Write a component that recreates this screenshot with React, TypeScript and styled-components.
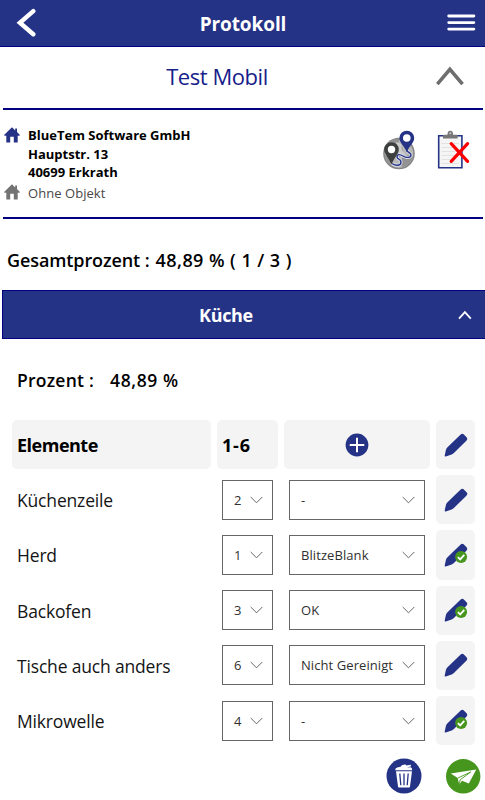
import React from "react";
import styled, { createGlobalStyle } from "styled-components";

const NAVY = "#253386";
const DEEP = "#000080";
const GREEN = "#46961e";

const Global = createGlobalStyle`
  * { box-sizing: border-box; }
  body { margin: 0; background: #fff; color: #000; font-family: "Open Sans", "Noto Sans", sans-serif; }
  button { border: 0; padding: 0; margin: 0; background: none; font: inherit; color: inherit; cursor: pointer; }
  svg { display: block; flex: none; }
`;

const Page = styled.main`
  width: 485px;
  height: 800px;
  overflow: hidden;
  display: flex;
  flex-direction: column;
  background: #fff;
`;

const AppBar = styled.header`
  height: 47px;
  flex: none;
  display: grid;
  grid-template-columns: 61px 1fr 60px;
  align-items: center;
  background: ${NAVY};
  border-bottom: 1px solid ${DEEP};
  color: #fff;
`;

const BackButton = styled.button`
  padding-left: 16px;
`;

const MenuButton = styled.button`
  padding-left: 22px;
`;

const AppTitle = styled.h1`
  margin: 0;
  padding-top: 1px;
  font-size: 19px;
  line-height: 26px;
  font-weight: 700;
  letter-spacing: -0.1px;
  text-align: center;
`;

const Client = styled.section`
  height: 63px;
  flex: none;
  margin: 0 2px 0 3px;
  display: grid;
  grid-template-columns: 47px 1fr 47px;
  align-items: center;
  border-bottom: 2px solid ${DEEP};
`;

const ClientName = styled.h2`
  grid-column: 2;
  margin: 0 52px 3px 0;
  font-size: 22px;
  line-height: 30px;
  letter-spacing: -0.45px;
  font-weight: 400;
  color: #16208a;
  text-align: center;
`;

const ClientToggle = styled.button`
  padding-bottom: 3px;
`;

const Info = styled.section`
  height: 109px;
  flex: none;
  margin: 0 2px 0 3px;
  padding: 16px 12px 0 1px;
  display: flex;
  justify-content: space-between;
  border-bottom: 2px solid ${DEEP};
`;

const InfoLines = styled.div`
  display: grid;
  grid-template-columns: 16px 1fr;
  grid-template-rows: 19px 18px 18px 22px;
  column-gap: 8px;
  align-content: start;
`;

const InfoLine = styled.span<{ $muted?: boolean }>`
  grid-column: 2;
  font-size: 13px;
  line-height: 18px;
  letter-spacing: ${(p) => (p.$muted ? "0.05px" : "0")};
  padding-top: ${(p) => (p.$muted ? "3px" : "0")};
  font-weight: ${(p) => (p.$muted ? 400 : 700)};
  color: ${(p) => (p.$muted ? "#484848" : "#000")};
`;

const HomeIcon = styled.svg<{ $muted?: boolean }>`
  grid-column: 1;
  fill: ${(p) => (p.$muted ? "#737373" : NAVY)};
  margin-top: ${(p) => (p.$muted ? "3px" : "1px")};
`;

const InfoActions = styled.div`
  display: flex;
  gap: 20px;
  padding: 4px 1px 0 0;
  height: 46px;
`;

const Total = styled.p`
  height: 71px;
  flex: none;
  margin: 0;
  padding: 11px 0 0 7px;
  display: flex;
  align-items: center;
  gap: 6px;
  font-size: 18px;
  font-weight: 600;
  letter-spacing: -0.1px;
`;

const TotalValue = styled.span`
  letter-spacing: 0.45px;
`;

const RoomBar = styled.button`
  height: 49px;
  flex: none;
  margin-left: 2px;
  display: grid;
  grid-template-columns: 40px 1fr 27px;
  align-items: center;
  background: ${NAVY};
  border: solid ${DEEP};
  border-width: 1px 0 1px 1px;
  color: #fff;
`;

const RoomName = styled.span`
  grid-column: 2;
  margin-right: 49px;
  font-size: 18px;
  line-height: 26px;
  font-weight: 700;
  letter-spacing: -0.35px;
  text-align: center;
`;

const RoomPercent = styled.p`
  height: 81px;
  flex: none;
  margin: 0;
  padding: 1px 0 0 17px;
  display: flex;
  align-items: center;
  gap: 16px;
  font-size: 17.5px;
  font-weight: 600;
  letter-spacing: 0.25px;
`;

const RoomValue = styled.span`
  letter-spacing: 0.6px;
`;

const Table = styled.div`
  flex: none;
  padding-left: 12px;
  display: grid;
  grid-template-columns: 199px 61px 146px 39px;
  grid-auto-rows: 49.2px;
  gap: 6px;
`;

const HeadCell = styled.div<{ $center?: boolean; $spacing?: string }>`
  display: flex;
  align-items: center;
  justify-content: ${(p) => (p.$center ? "center" : "flex-start")};
  padding: ${(p) => (p.$center ? "0" : "1px 0 0 5px")};
  background: #f4f4f4;
  border-radius: 5px;
  font-size: 18px;
  font-weight: 700;
  letter-spacing: ${(p) => p.$spacing ?? "0"};
`;

const ItemName = styled.div`
  display: flex;
  align-items: center;
  padding: 1px 0 0 5px;
  font-size: 17.5px;
  letter-spacing: -0.17px;
  color: #141414;
`;

const SelectBox = styled.button`
  height: 40px;
  margin: 4.6px 5px 0;
  padding: 0 9px 0 11px;
  display: flex;
  align-items: center;
  justify-content: space-between;
  border: 1px solid #666;
  background: #fff;
  font-size: 13px;
  line-height: 18px;
  letter-spacing: 0.08px;
  color: #303030;
  white-space: nowrap;
`;

const EditButton = styled.button`
  display: flex;
  align-items: center;
  justify-content: center;
  background: #f4f4f4;
  border-radius: 5px;
`;

const Footer = styled.footer`
  display: flex;
  justify-content: flex-end;
  gap: 23px;
  padding: 13px 4px 0 0;
`;

const DownChevron = () => (
  <svg width="13" height="8" viewBox="0 0 13 8" fill="none" stroke="#666" strokeWidth="1">
    <path d="M.7 1 6.5 6.8 12.3 1" />
  </svg>
);

const Home = ({ muted }: { muted?: boolean }) => (
  <HomeIcon $muted={muted} width="16" height="16" viewBox="0 0 16 16">
    <path d="M8 .3 .3 7.8v.9h2V15.5h3.9V9.7h3.6v5.8h3.9V8.7h2v-.9L13 5.1V1.6h-1.8v1.8z" />
  </HomeIcon>
);

const Pencil = ({ done }: { done?: boolean }) => (
  <svg width="24" height="24" viewBox="0 0 24 24">
    <path
      fill={NAVY}
      d="M16.4 1.7Q18.2.1 19.6 1.3L22.8 4.4Q24 5.8 22.6 7.5L9.9 20Q8.7 21.1 7 21.7L1.7 23.4Q.5 23.6.7 22.4L1.9 17Q2.3 15.2 3.5 14.2Z"
    />
    {done && (
      <>
        <circle cx="17.1" cy="13.9" r="6" fill={GREEN} />
        <path d="m13.9 14.1 2.3 2.3 4.1-4.6" fill="none" stroke="#fff" strokeWidth="1.8" />
      </>
    )}
  </svg>
);

const Globe = () => (
  <svg width="34" height="40" viewBox="0 0 34 40">
    <circle cx="16" cy="23.5" r="15.8" fill="#858585" />
    <circle cx="16" cy="23.5" r="14.3" fill="#b9b9b9" />
    <path d="M5 14Q11 8 17 9l-2 4 4 4 2 7-5 3-3-7-5-5zM19 28l8-4 3 3q-3 8-10 10l-4-2zM2 24l5 5 1 6q-6-4-6-11" fill="#929292" />
    <path d="M13 12l5 2 1 6 3 4-5 2-3-5z" fill="#dedede" opacity=".75" />
    <path d="M9 33.5C13 36 18 36 18 32s-4-2-4-5 3-3 6-1 8 2 8-1-4-2-4-5" fill="none" stroke="#e1e2ef" strokeWidth="3" />
    <path d="M9 33.5C13 36 18 36 18 32s-4-2-4-5 3-3 6-1 8 2 8-1-4-2-4-5" fill="none" stroke={NAVY} strokeWidth="1.4" />
    <path fill="#3d3f3e" d="M8.5 12.2A7.3 7.3 0 0 0 1.2 19.5C1.2 24 6 28 8.5 34.5 11 28 15.8 24 15.8 19.5A7.3 7.3 0 0 0 8.5 12.2" />
    <circle cx="8.5" cy="19.5" r="3.7" fill="#fff" />
    <path fill={NAVY} d="M23.8.7A7.4 7.4 0 0 0 16.4 8.1C16.4 13 21 15.5 23.8 22.2 26.6 15.5 31.2 13 31.2 8.1A7.4 7.4 0 0 0 23.8.7" />
    <circle cx="23.8" cy="8" r="3.8" fill="#fff" />
  </svg>
);

const Clipboard = () => (
  <svg width="33" height="40" viewBox="0 0 33 40">
    <path d="M1.7 5.8h23.2v32H1.7z" fill="#f5f5f5" stroke={NAVY} strokeWidth="1.6" />
    <path d="M4.5 13.5h17.5M4.5 17.5h12M4.5 21.5h14M4.5 25.5h14M4.5 29.5h12M4.5 33.5h17.5" stroke="#e2e2e2" />
    <path d="M6 8.5V5.8Q6 4.8 7 4.8h3.5Q10.3.8 13.3.7q3 .1 2.8 4.1h3.5q1 0 1 1v2.7z" fill="#777" />
    <circle cx="13.3" cy="3.3" r="1" fill="#ccc" />
    <path d="m14.2 13.7 16.4 17.6M30.6 13.7 14.2 31.3" stroke="red" strokeWidth="3.2" strokeLinecap="round" />
  </svg>
);

const items = [
  { name: "Küchenzeile", grade: "2", state: "-", done: false },
  { name: "Herd", grade: "1", state: "BlitzeBlank", done: true },
  { name: "Backofen", grade: "3", state: "OK", done: true },
  { name: "Tische auch anders", grade: "6", state: "Nicht Gereinigt", done: false },
  { name: "Mikrowelle", grade: "4", state: "-", done: true },
];

export default function App() {
  return (
    <Page>
      <Global />
      <AppBar>
        <BackButton aria-label="Zurück">
          <svg width="20" height="30" viewBox="0 0 20 30" fill="none" stroke="#fff" strokeWidth="4.4" strokeLinecap="round" strokeLinejoin="miter">
            <path d="M17.3 3.2 3.9 14.8 17.3 26.2" />
          </svg>
        </BackButton>
        <AppTitle>Protokoll</AppTitle>
        <MenuButton aria-label="Menü">
          <svg width="29" height="18" viewBox="0 0 29 18" stroke="#fff" strokeWidth="2.8" strokeLinecap="round">
            <path d="M1.7 2h25.2M1.7 8.6h25.2M1.7 15.1h25.2" />
          </svg>
        </MenuButton>
      </AppBar>

      <Client>
        <ClientName>Test Mobil</ClientName>
        <ClientToggle aria-label="Einklappen">
          <svg width="28" height="20" viewBox="0 0 28 20" fill="none" stroke="#6e6e6e" strokeWidth="3.6">
            <path d="M1.3 18.2 13.9 3.3 26.5 18.2" />
          </svg>
        </ClientToggle>
      </Client>

      <Info>
        <InfoLines>
          <Home />
          <InfoLine>BlueTem Software GmbH</InfoLine>
          <InfoLine>Hauptstr. 13</InfoLine>
          <InfoLine>40699 Erkrath</InfoLine>
          <Home muted />
          <InfoLine $muted>Ohne Objekt</InfoLine>
        </InfoLines>
        <InfoActions>
          <Globe />
          <Clipboard />
        </InfoActions>
      </Info>

      <Total>
        <span>Gesamtprozent :</span>
        <TotalValue>48,89 % ( 1 / 3 )</TotalValue>
      </Total>

      <RoomBar>
        <RoomName>Küche</RoomName>
        <svg width="14" height="10" viewBox="0 0 14 10" fill="none" stroke="#fff" strokeWidth="1.8">
          <path d="M1 8.7 6.9 2.2 12.8 8.7" />
        </svg>
      </RoomBar>

      <RoomPercent>
        <span>Prozent :</span>
        <RoomValue>48,89 %</RoomValue>
      </RoomPercent>

      <Table>
        <HeadCell $spacing="-0.5px">Elemente</HeadCell>
        <HeadCell $spacing="0.8px">1-6</HeadCell>
        <HeadCell $center>
          <svg width="24" height="24" viewBox="0 0 24 24">
            <circle cx="12" cy="12" r="11.4" fill={NAVY} />
            <path d="M12 4.7v14.6M4.7 12h14.6" stroke="#fff" strokeWidth="2" />
          </svg>
        </HeadCell>
        <EditButton aria-label="Bearbeiten"><Pencil /></EditButton>
        {items.map((item) => (
          <React.Fragment key={item.name}>
            <ItemName>{item.name}</ItemName>
            <SelectBox>{item.grade}<DownChevron /></SelectBox>
            <SelectBox>{item.state}<DownChevron /></SelectBox>
            <EditButton aria-label="Bearbeiten"><Pencil done={item.done} /></EditButton>
          </React.Fragment>
        ))}
      </Table>

      <Footer>
        <button aria-label="Löschen">
          <svg width="36" height="36" viewBox="0 0 36 36">
            <circle cx="18" cy="18" r="17.5" fill={NAVY} />
            <path d="M10 13.2h16l-2 15.2q-.2 1.2-1.4 1.2h-9.2q-1.2 0-1.4-1.2z" fill="#fff" />
            <path d="M13.8 15.5l1 11.8M18 15.5v11.8M22.2 15.5l-1 11.8" stroke={NAVY} strokeWidth="1.3" />
            <path d="M9.2 12.2q-.2-2 2-2.6l3.4-.8q.3-1.5 2-1.9l2.2-.3q1.2-.1 1.7 1l4.2-.9.4 1.5-4 1.4 3.5-.3q1.5.2 1.5 2.3v.6z" fill="#fff" />
          </svg>
        </button>
        <button aria-label="Senden">
          <svg width="36" height="36" viewBox="0 0 36 36">
            <circle cx="18.2" cy="18.3" r="17.2" fill={GREEN} />
            <path d="M5.7 15.4 31.3 11.6 23.8 25.6 17 22.7 14.2 26.6 12.7 20.1z" fill="#fff" />
            <path d="M12.7 20.1 25.7 14 15.2 21.8 14.2 26" fill="none" stroke={GREEN} strokeWidth=".9" />
          </svg>
        </button>
      </Footer>
    </Page>
  );
}
